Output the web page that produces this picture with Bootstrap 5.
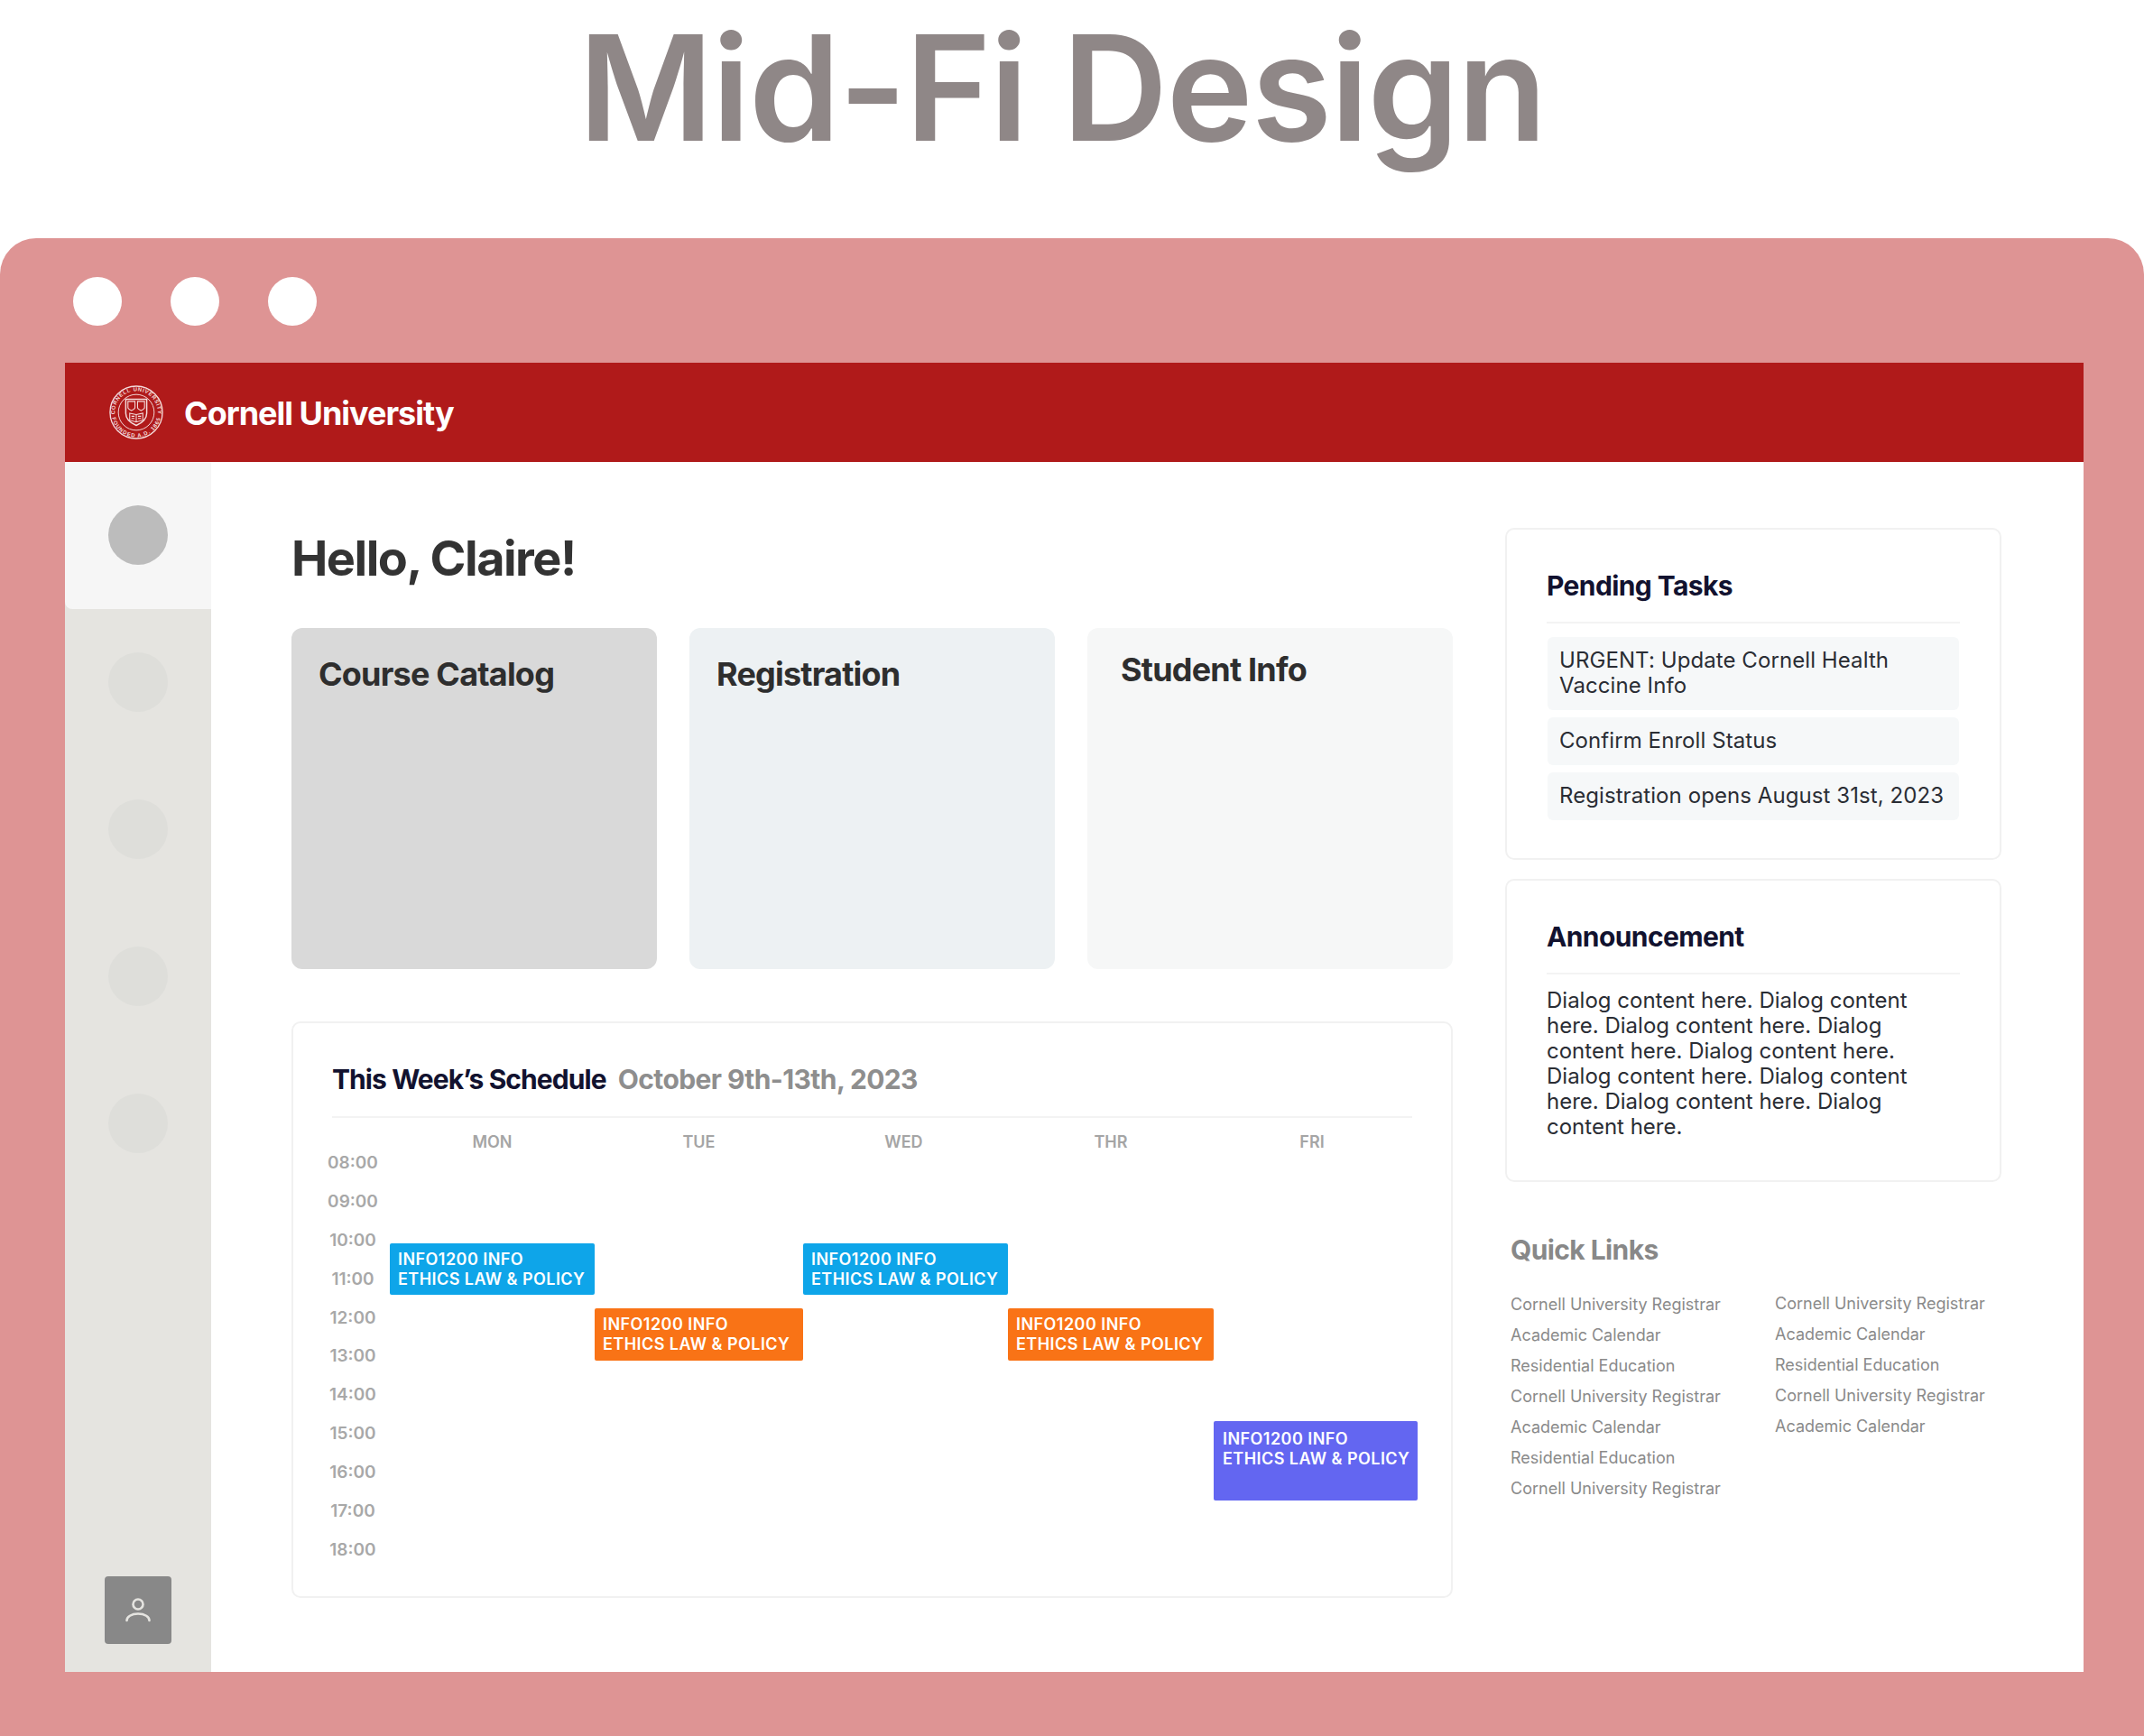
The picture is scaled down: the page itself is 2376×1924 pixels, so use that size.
<!DOCTYPE html>
<html lang="en">
<head>
  <meta charset="UTF-8">
  <title>Mid-Fi Design</title>
  <link href="https://cdn.jsdelivr.net/npm/bootstrap@5.3.0/dist/css/bootstrap.min.css" rel="stylesheet">
  <style>
    body { font-family: Inter, "Liberation Sans", sans-serif; background: #fff; width: 2376px; height: 1924px; overflow: hidden; }
    .page-title { height: 264px; margin: 0; padding-right: 22px; font-size: 162px; font-weight: 630; line-height: 195px; color: #8f8787; text-align: center; letter-spacing: -1.5px; }
    .win { height: 1660px; background: #de9494; border-radius: 40px 40px 0 0; padding: 2px 67px 71px 72px; }
    .win-dots { height: 136px; padding-left: 9px; gap: 54px; flex: none; }
    .win-dot { width: 54px; height: 54px; border-radius: 50%; background: #fff; }
    .app { height: 1451px; background: #fff; }
    .topbar { height: 110px; background: #b01a1a; padding-left: 49px; gap: 23px; color: #fff; flex: none; }
    .topbar-name { font-size: 36px; font-weight: 650; letter-spacing: -1px; margin-top: 2px; }
    .side { width: 162px; background: #e5e4e0; flex: none; }
    .side-item { height: 163px; }
    .side-item.on { background: #f6f6f6; border-bottom-left-radius: 8px; padding-bottom: 2px; }
    .side-dot { width: 66px; height: 66px; border-radius: 50%; background: #dededa; margin-top: -2px; }
    .on .side-dot { background: #bcbcbc; margin-top: 0; }
    .side-user { width: 74px; height: 75px; background: #888; border-radius: 4px; margin-bottom: 31px; }
    .content { padding: 73px 90px 0 89px; gap: 58px; }
    .left-col { width: 1287px; flex: none; }
    .right-col { width: 550px; flex: none; }
    .hello { font-size: 54px; font-weight: 700; color: #333; letter-spacing: -1.5px; line-height: 64px; margin: 2px 0 45px; }
    .tile-row { gap: 36px; }
    .tile { width: 405px; height: 378px; border-radius: 12px; padding: 29px 30px; flex: none; }
    .tile h3 { font-size: 36px; font-weight: 650; color: #2e2e2e; letter-spacing: -0.8px; margin: 0; line-height: 44px; }
    .tile-a { background: #d9d9d9; }
    .tile-b { background: #edf1f3; }
    .tile-c { background: #f6f7f7; padding-top: 24px; padding-left: 37px; }
    .panel { border: 2px solid #f1f1f1; border-radius: 10px; background: #fff; }
    .sched { height: 639px; margin-top: 58px; padding: 40px 43px 0 43px; }
    .sched-head { height: 65px; border-bottom: 2px solid #f3f3f3; font-size: 30px; font-weight: 650; line-height: 44px; gap: 13px; }
    .sched-head b { font-weight: 650; color: #12122f; letter-spacing: -0.92px; }
    .sched-head span { color: #8e8e8e; letter-spacing: -0.6px; }
    .sched-body { margin-left: -12px; margin-right: -6px; }
    .hours { width: 76px; padding-top: 29px; flex: none; }
    .hour { height: 42.9px; font-size: 19px; font-weight: 600; color: #a8a8a8; line-height: 42.9px; text-align: center; padding-right: 6px; }
    .cal { display: grid; grid-template-columns: 227px 231px 227px 228px 226px; grid-template-rows: 51px 88px 57px 15px 58px 67px 88px; flex: none; }
    .day { font-size: 18px; font-weight: 600; color: #a5a5a5; text-align: center; padding-top: 14px; line-height: 26px; }
    .ev { color: #fff; font-size: 18px; font-weight: 600; line-height: 22px; letter-spacing: 0.45px; padding: 7px 0 0 9px; border-radius: 2px; white-space: nowrap; }
    .ev-blue { background: #0ea5e9; }
    .ev-orange { background: #f97316; }
    .ev-indigo { background: #6366f1; padding-top: 9px; padding-left: 10px; }
    .ev-mon { grid-area: 3 / 1 / 4 / 2; }
    .ev-tue { grid-area: 5 / 2 / 6 / 3; }
    .ev-wed { grid-area: 3 / 3 / 4 / 4; }
    .ev-thr { grid-area: 5 / 4 / 6 / 5; }
    .ev-fri { grid-area: 7 / 5 / 8 / 6; }
    .side-card { padding: 40px 44px 0 44px; }
    .side-card h4 { font-size: 30px; font-weight: 650; color: #12122f; letter-spacing: -0.6px; margin: 0; line-height: 44px; height: 64px; border-bottom: 2px solid #f3f3f3; }
    .tasks { margin: 15px 1px 0; gap: 8px; }
    .task { background: #f6f8f9; border-radius: 6px; padding: 12px 13px 13px; font-size: 24px; line-height: 28px; letter-spacing: 0.08px; color: #2a2d34; }
    .pending { height: 368px; }
    .announce { height: 336px; margin-top: 21px; }
    .announce p { margin: 15px 0 0; font-size: 24px; line-height: 28px; color: #2a2d34; }
    .quick-title { font-size: 30px; font-weight: 650; color: #888; letter-spacing: -0.6px; margin: 55px 0 0 6px; line-height: 40px; }
    .quick { margin: 24px 0 0 6px; gap: 61px; }
    .quick-col { width: 232px; font-size: 18px; color: #8a8a8a; line-height: 34px; white-space: nowrap; }
    .quick-col.alt { margin-top: -1px; }
  </style>
</head>
<body>
  <h1 class="page-title">Mid-Fi Design</h1>

  <div class="win d-flex flex-column">
    <div class="win-dots d-flex align-items-center">
      <div class="win-dot"></div>
      <div class="win-dot"></div>
      <div class="win-dot"></div>
    </div>

    <div class="app d-flex flex-column">
      <div class="topbar d-flex align-items-center">
        <svg width="60" height="60" viewBox="0 0 62 62" fill="none" stroke="#f4dcdc">
          <defs>
            <path id="arcTop" d="M6.5 31a24.500 24.500 0 0 1 49 0"></path>
            <path id="arcBot" d="M2.500 31a28.500 28.500 0 0 0 57 0"></path>
          </defs>
          <circle cx="31" cy="31" r="30" stroke-width="1.400"></circle>
          <circle cx="31" cy="31" r="20.500" stroke-width="1"></circle>
          <text font-family="Liberation Sans, sans-serif" font-size="6.200" font-weight="700" fill="#f4dcdc" stroke="none" letter-spacing="0.700"><textPath href="#arcTop" startOffset="50%" text-anchor="middle">CORNELL UNIVERSITY</textPath></text>
          <text font-family="Liberation Sans, sans-serif" font-size="6.200" font-weight="700" fill="#f4dcdc" stroke="none" letter-spacing="1"><textPath href="#arcBot" startOffset="50%" text-anchor="middle">FOUNDED A.D. 1865</textPath></text>
          <path d="M19 16h24v16c0 7-5 11-12 14-7-3-12-7-12-14z" stroke-width="1.500"></path>
          <path d="M21.500 18.500h8v7c0 1.500-2 2.500-4 3.500-2-1-4-2-4-3.500zM32.500 18.500h8v7c0 1.500-2 2.500-4 3.500-2-1-4-2-4-3.500z" stroke-width="1.100"></path>
          <path d="M23.500 32l7.500 1.500 7.500-1.500v8l-7.500 2-7.500-2zM31 33.500v8.500M25.500 35.500h3.500M25.500 38h3.500M33 35.500h3.500M33 38h3.500" stroke-width="1.100"></path>
        </svg>
        <div class="topbar-name">Cornell University</div>
      </div>

      <div class="d-flex flex-grow-1">
        <div class="side d-flex flex-column">
          <div class="side-item on d-flex align-items-center justify-content-center"><div class="side-dot"></div></div>
          <div class="side-item d-flex align-items-center justify-content-center"><div class="side-dot"></div></div>
          <div class="side-item d-flex align-items-center justify-content-center"><div class="side-dot"></div></div>
          <div class="side-item d-flex align-items-center justify-content-center"><div class="side-dot"></div></div>
          <div class="side-item d-flex align-items-center justify-content-center"><div class="side-dot"></div></div>
          <div class="mt-auto d-flex justify-content-center">
            <div class="side-user d-flex align-items-center justify-content-center">
              <svg width="32" height="32" viewBox="0 0 32 32" fill="none" stroke="#e5e4e0" stroke-width="2.600" stroke-linecap="round">
                <circle cx="16" cy="9" r="5.500"></circle>
                <path d="M3.500 27c0-4 5-7.500 12.500-7.500S28.500 23 28.500 27"></path>
              </svg>
            </div>
          </div>
        </div>

        <div class="content d-flex flex-grow-1">
          <div class="left-col">
            <h2 class="hello">Hello, Claire!</h2>
            <div class="tile-row d-flex">
              <div class="tile tile-a"><h3>Course Catalog</h3></div>
              <div class="tile tile-b"><h3>Registration</h3></div>
              <div class="tile tile-c"><h3>Student Info</h3></div>
            </div>

            <div class="panel sched">
              <div class="sched-head d-flex"><b>This Week’s Schedule</b><span>October 9th-13th, 2023</span></div>
              <div class="sched-body d-flex">
                <div class="hours">
                  <div class="hour">08:00</div>
                  <div class="hour">09:00</div>
                  <div class="hour">10:00</div>
                  <div class="hour">11:00</div>
                  <div class="hour">12:00</div>
                  <div class="hour">13:00</div>
                  <div class="hour">14:00</div>
                  <div class="hour">15:00</div>
                  <div class="hour">16:00</div>
                  <div class="hour">17:00</div>
                  <div class="hour">18:00</div>
                </div>
                <div class="cal">
                  <div class="day">MON</div>
                  <div class="day">TUE</div>
                  <div class="day pe-1">WED</div>
                  <div class="day">THR</div>
                  <div class="day pe-2">FRI</div>
                  <div class="ev ev-blue ev-mon">INFO1200 INFO<br>ETHICS LAW &amp; POLICY</div>
                  <div class="ev ev-blue ev-wed">INFO1200 INFO<br>ETHICS LAW &amp; POLICY</div>
                  <div class="ev ev-orange ev-tue">INFO1200 INFO<br>ETHICS LAW &amp; POLICY</div>
                  <div class="ev ev-orange ev-thr">INFO1200 INFO<br>ETHICS LAW &amp; POLICY</div>
                  <div class="ev ev-indigo ev-fri">INFO1200 INFO<br>ETHICS LAW &amp; POLICY</div>
                </div>
              </div>
            </div>
          </div>

          <div class="right-col">
            <div class="panel side-card pending">
              <h4>Pending Tasks</h4>
              <div class="tasks d-flex flex-column">
                <div class="task">URGENT: Update Cornell Health Vaccine Info</div>
                <div class="task">Confirm Enroll Status</div>
                <div class="task">Registration opens August 31st, 2023</div>
              </div>
            </div>

            <div class="panel side-card announce">
              <h4>Announcement</h4>
              <p>Dialog content here. Dialog content here. Dialog content here. Dialog content here. Dialog content here. Dialog content here. Dialog content here. Dialog content here. Dialog content here.</p>
            </div>

            <div class="quick-title">Quick Links</div>
            <div class="quick d-flex">
              <div class="quick-col">
                <div>Cornell University Registrar</div>
                <div>Academic Calendar</div>
                <div>Residential Education</div>
                <div>Cornell University Registrar</div>
                <div>Academic Calendar</div>
                <div>Residential Education</div>
                <div>Cornell University Registrar</div>
              </div>
              <div class="quick-col alt">
                <div>Cornell University Registrar</div>
                <div>Academic Calendar</div>
                <div>Residential Education</div>
                <div>Cornell University Registrar</div>
                <div>Academic Calendar</div>
              </div>
            </div>
          </div>
        </div>
      </div>
    </div>
  </div>

  <script src="https://cdn.jsdelivr.net/npm/bootstrap@5.3.0/dist/js/bootstrap.bundle.min.js"></script>
</body>
</html>
